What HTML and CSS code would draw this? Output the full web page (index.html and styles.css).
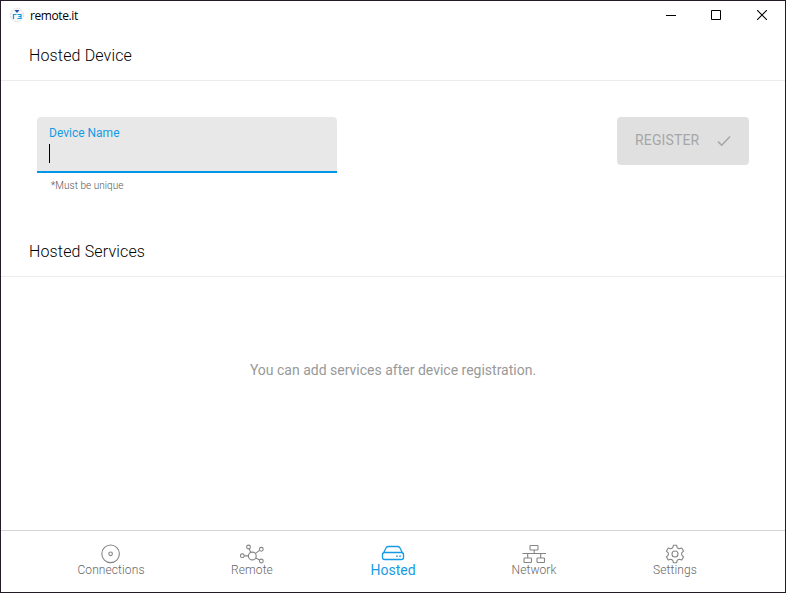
FILE: index.html
```html
<!DOCTYPE html>
<html lang="en">
<head>
<meta charset="utf-8">
<title>remote.it</title>
<link rel="stylesheet" href="styles.css">
</head>
<body>
<div class="window">
  <header class="titlebar">
    <svg class="logo" width="16" height="16" viewBox="0 0 16 16" fill="none">
      <circle cx="8" cy="8" r="6.700" fill="#f4f6f7" stroke="#dedede" stroke-dasharray="2 1"/>
      <path d="M5.500 3h5L8 6z" fill="#234fa5"/>
      <path d="M4.500 12V7.500h3M8.500 7.500h3.500v4h-3.500M9.500 9.500H12" stroke="#159bdc" stroke-width="1.200"/>
    </svg>
    <span class="app-name">remote.it</span>
    <div class="controls">
      <svg width="10" height="10" viewBox="0 0 10 10"><path d="M0 5.500h10" stroke="#000"/></svg>
      <svg width="10" height="10" viewBox="0 0 10 10"><path d="M.5.5h9v9h-9z" fill="none" stroke="#000"/></svg>
      <svg width="10" height="10" viewBox="0 0 10 10"><path d="M0 0l10 10M10 0L0 10" stroke="#000" stroke-width="1.100"/></svg>
    </div>
  </header>
  <main class="content">
    <h1 class="heading">Hosted Device</h1>
    <section class="device">
      <div class="field">
        <div class="input">
          <label class="label">Device Name</label>
          <span class="caret"></span>
        </div>
        <p class="hint">*Must be unique</p>
      </div>
      <button class="register" disabled>
        <span>REGISTER</span>
        <svg width="14" height="12" viewBox="0 0 14 12" fill="none" stroke="#a6a6a6" stroke-width="1.500"><path d="M1 6.600l3.700 3.600L13 1.600"/></svg>
      </button>
    </section>
    <h2 class="heading">Hosted Services</h2>
    <p class="empty">You can add services after device registration.</p>
  </main>
  <nav class="nav">
    <a class="tab">
      <svg width="26" height="20" viewBox="0 0 26 20"><circle cx="12.600" cy="9.800" r="8.800"/><circle cx="12.600" cy="9.800" r="1.800"/></svg>
      <span>Connections</span>
    </a>
    <a class="tab">
      <svg width="26" height="20" viewBox="0 0 26 20"><circle cx="13.300" cy="12" r="3.900"/><circle cx="9.500" cy="3" r="1.900"/><circle cx="22.300" cy="5.300" r="1.900"/><circle cx="3.300" cy="11.800" r="1.900"/><circle cx="22.300" cy="17" r="1.900"/><path d="M10.200 4.800l1.500 3.700M20.600 6.400l-4.100 3M5.200 11.900h4.200M16.700 14l4 2.100"/></svg>
      <span>Remote</span>
    </a>
    <a class="tab active">
      <svg width="26" height="20" viewBox="0 0 26 20"><path d="M2.900 10L6.300 3.500q.8-1 2-1h9.400q1.200 0 2 1L23.100 10M4.500 8.500h17q2 0 2 2v3q0 2-2 2h-17q-2 0-2-2v-3q0-2 2-2z"/><path d="M16.200 12.300h1.500M19.300 12.300h1.500" stroke-width="1.600"/></svg>
      <span>Hosted</span>
    </a>
    <a class="tab">
      <svg width="26" height="20" viewBox="0 0 26 20"><rect x="9" y="1.500" width="8" height="4.500" rx=".7"/><rect x="3" y="14" width="7.500" height="4.500" rx=".7"/><rect x="16" y="14" width="7.500" height="4.500" rx=".7"/><path d="M13.200 6v4M1.500 9.500H25M6.700 9.500V14M19.700 9.500V14"/></svg>
      <span>Network</span>
    </a>
    <a class="tab">
      <svg width="26" height="20" viewBox="0 0 26 20"><path d="M11.400 1.200h3.200l.6 2.500 2 1.100 2.600-.8 1.800 3.200-1.900 1.700v2.200l1.900 1.700-1.800 3.200-2.600-.8-2 1.100-.6 2.500h-3.200l-.6-2.500-2-1.100-2.600.8-1.800-3.200 1.900-1.700V8.900L4.400 7.200 6.200 4l2.600.8 2-1.100z" stroke-linejoin="round"/><circle cx="13" cy="10" r="3"/></svg>
      <span>Settings</span>
    </a>
  </nav>
</div>
</body>
</html>
```
FILE: styles.css
```css
* { box-sizing: border-box; }
body { margin: 0; font-family: Roboto, sans-serif; background: #fff; }
.window { display: flex; flex-direction: column; height: 593px; border: 1px solid #231b2a; background: #fff; }
.titlebar { display: flex; align-items: center; height: 29px; padding: 0 18px 1px 8px; }
.app-name { margin-left: 5px; padding-top: 1px; font: 12px "Open Sans", sans-serif; letter-spacing: -.4px; color: #000; }
.controls { display: flex; gap: 35px; margin-left: auto; }
.controls svg:last-child { margin-left: 1px; }
.content { flex: 1; }
.heading { height: 51px; margin: 0; padding: 1px 0 0 28px; border-bottom: 1px solid #ececec; font-size: 16px; font-weight: 300; line-height: 50px; letter-spacing: .15px; color: #000; }
.device { display: flex; justify-content: space-between; height: 145px; padding: 36px 36px 0; }
.input { width: 300px; height: 56px; padding: 8px 12px 0; border-bottom: 2px solid #0096e7; border-radius: 4px 4px 0 0; background: #e8e8e8; }
.label { display: block; height: 19px; font-size: 12px; line-height: 16px; letter-spacing: 0; color: #159be3; }
.caret { display: block; width: 1px; height: 19px; background: #000; }
.hint { margin: 6px 0 0 14px; font-size: 10px; font-weight: 300; line-height: 13px; letter-spacing: .05px; color: #555; }
.register { display: flex; align-items: center; justify-content: space-between; width: 132px; height: 48px; padding: 0 18px; border: 0; border-radius: 4px; background: #e0e0e0; font: 400 14px Roboto, sans-serif; letter-spacing: .15px; color: #a6a6a6; }
.register span { padding-bottom: 2px; }
.empty { margin: 83px 0 0; font-size: 14px; line-height: 20px; text-align: center; color: #999; }
.nav { display: flex; justify-content: center; height: 62px; border-top: 1px solid #d5d5d5; }
.tab { display: flex; flex-direction: column; align-items: center; width: 141px; padding-top: 13px; font-size: 12px; font-weight: 300; line-height: 13px; letter-spacing: .1px; color: #666; }
.tab svg { fill: none; stroke: #858585; stroke-width: 1.100; }
.tab.active { font-size: 14px; font-weight: 400; letter-spacing: 0; color: #159be3; }
.tab.active svg { stroke: currentColor; stroke-width: 1.300; }
```
